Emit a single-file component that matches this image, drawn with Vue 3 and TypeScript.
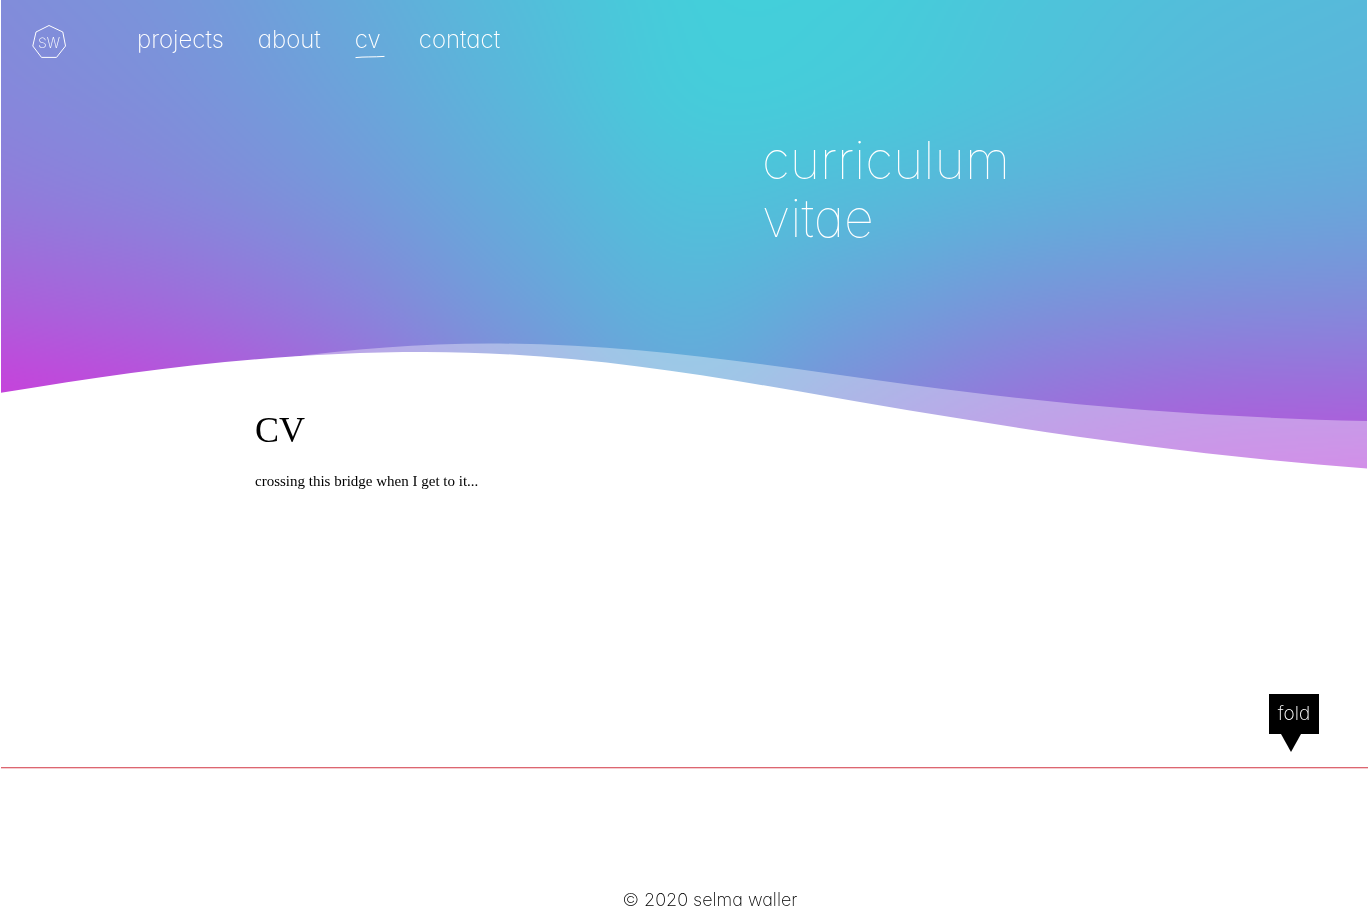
<script setup lang="ts">
import { onMounted, ref } from 'vue'

interface NavItem {
  label: string
  href: string
  active?: boolean
}

const navItems: NavItem[] = [
  { label: 'projects', href: '#projects' },
  { label: 'about', href: '#about' },
  { label: 'cv', href: '#cv', active: true },
  { label: 'contact', href: '#contact' },
]

// Mesh gradient: each value is the share of magenta over cyan at a node.
// Columns are spread evenly over the width, rows sit 100px apart.
const mesh: number[][] = [
  [0.48, 0.41, 0.28, 0.14, 0.02, 0.02, 0.08, 0.13, 0.16],
  [0.52, 0.45, 0.33, 0.18, 0.04, 0.05, 0.11, 0.17, 0.2],
  [0.61, 0.53, 0.41, 0.25, 0.11, 0.15, 0.22, 0.27, 0.3],
  [0.79, 0.7, 0.55, 0.35, 0.2, 0.3, 0.41, 0.46, 0.48],
  [1, 0.91, 0.74, 0.5, 0.31, 0.47, 0.63, 0.71, 0.73],
  [1, 0.98, 0.85, 0.65, 0.45, 0.65, 0.82, 0.92, 0.98],
]
const cyan = [66, 208, 218]
const magenta = [198, 67, 219]
const heroHeight = 470
const rowStep = 100

const canvas = ref<HTMLCanvasElement | null>(null)

function spline(a: number, b: number, c: number, d: number, t: number): number {
  return b + 0.5 * t * (c - a + t * (2 * a - 5 * b + 4 * c - d + t * (3 * (b - c) + d - a)))
}

function sampleLine(values: number[], pos: number): number {
  const last = values.length - 1
  const i = Math.min(Math.floor(pos), last - 1)
  const a = i > 0 ? values[i - 1] : 2 * values[0] - values[1]
  const d = i + 2 <= last ? values[i + 2] : 2 * values[last] - values[last - 1]
  return spline(a, values[i], values[i + 1], d, pos - i)
}

onMounted(() => {
  const el = canvas.value
  const ctx = el?.getContext('2d')
  if (!el || !ctx) return
  const { width, height } = el
  const image = ctx.createImageData(width, height)
  for (let x = 0; x < width; x++) {
    const column = mesh.map((row) => sampleLine(row, (x / (width - 1)) * (row.length - 1)))
    for (let y = 0; y < height; y++) {
      const pos = ((y / (height - 1)) * heroHeight) / rowStep
      const mix = Math.min(1, Math.max(0, sampleLine(column, pos)))
      const offset = (y * width + x) * 4
      for (let c = 0; c < 3; c++) {
        image.data[offset + c] = Math.round(cyan[c] + (magenta[c] - cyan[c]) * mix)
      }
      image.data[offset + 3] = 255
    }
  }
  ctx.putImageData(image, 0, 0)
})
</script>

<template>
  <div class="page">
    <header class="hero">
      <canvas ref="canvas" class="backdrop" width="683" height="235" aria-hidden="true"></canvas>
      <svg class="waves" viewBox="1 0 1366 470" preserveAspectRatio="none" aria-hidden="true">
        <path
          class="wave-light"
          d="M285 358 C350 349 420 343.5 490 343.5 C640 343.5 770 366 912 385 C1060 405 1200 417 1367 421 V471 H285 Z"
        />
        <path
          class="wave-solid"
          d="M0 393 C150 368 280 352 425 352 C560 352 680 371 800 391.5 C980 423 1160 453 1368 468.5 V471 H0 Z"
        />
      </svg>
      <div class="hero-content">
        <div class="bar">
          <a class="logo" href="#home" aria-label="SW home">
            <svg width="36" height="36" viewBox="0 0 36 36">
              <path d="M18 1.5 L31.8 8 L34.5 22 L25.5 33.4 H10.5 L1.8 22 L5 8 Z" />
              <text x="18" y="24" text-anchor="middle">SW</text>
            </svg>
          </a>
          <nav class="nav">
            <a
              v-for="item in navItems"
              :key="item.label"
              :href="item.href"
              :class="{ active: item.active }"
              :aria-current="item.active ? 'page' : undefined"
            >
              <span>{{ item.label }}</span>
              <svg v-if="item.active" width="30" height="4" viewBox="0 0 30 4" aria-hidden="true">
                <path d="M0.5 2.6 C9 1.6 18 2.2 29.5 1.4" />
              </svg>
            </a>
          </nav>
        </div>
        <p class="hero-title">curriculum<br />vitae</p>
      </div>
    </header>

    <main class="content">
      <h1>CV</h1>
      <p>crossing this bridge when I get to it...</p>
    </main>

    <div class="fold">
      <span class="fold-tag">fold</span>
    </div>

    <footer class="footer">© 2020 selma waller</footer>
  </div>
</template>

<style>
body {
  margin: 0;
  background: #fff;
}
</style>

<style scoped>
.page {
  display: flex;
  flex-direction: column;
  min-height: 100vh;
  overflow: hidden;
  color: #000;
  font-family: Inter, 'Liberation Sans', sans-serif;
  font-weight: 100;
  font-feature-settings: 'cv11' 1;
}

.hero {
  display: grid;
  min-height: 470px;
  margin: 0 1px;
  color: #fff;
}

.backdrop,
.waves,
.hero-content {
  grid-area: 1 / 1;
  min-width: 0;
}

.backdrop,
.waves {
  display: block;
  width: 100%;
  height: 470px;
}

.wave-light {
  fill: #fff;
  fill-opacity: 0.36;
}

.wave-solid {
  fill: #fff;
}

.bar {
  display: flex;
  align-items: flex-start;
  gap: 70px;
  padding: 24px 30px 0;
}

.logo {
  display: block;
  height: 36px;
}

.logo svg {
  display: block;
  fill: none;
  stroke: #fff;
  stroke-width: 1;
}

.logo text {
  fill: #fff;
  stroke: none;
  font-size: 14px;
  font-weight: 200;
}

.nav {
  display: flex;
  gap: 34px;
}

.nav a {
  display: flex;
  flex-direction: column;
  color: #fff;
  font-size: 24px;
  font-weight: 200;
  line-height: 31px;
  text-decoration: none;
}

.nav svg {
  display: block;
  fill: none;
  stroke: #fff;
}

.hero-title {
  margin: 72px 0 0 calc(56% - 4px);
  font-size: 52px;
  line-height: 58px;
}

.content {
  margin: -60px 255px 0;
  font-family: 'Liberation Serif', serif;
  font-weight: 400;
}

.content h1 {
  margin: 0;
  font-size: 36px;
  font-weight: 400;
  line-height: 40px;
}

.content p {
  margin: 20px 0 0;
  font-size: 15px;
  line-height: 22px;
}

.fold {
  display: flex;
  justify-content: flex-end;
  margin: 202px 0 0 1px;
  padding: 0 49px 15px 0;
  border-bottom: 1px solid #dc6670;
  box-shadow: 0 1px #f6ccd0;
}

.fold-tag {
  position: relative;
  width: 50px;
  margin-bottom: 18px;
  color: #fff;
  background: #000;
  font-size: 19px;
  font-weight: 200;
  line-height: 40px;
  text-align: center;
}

.fold-tag::after {
  content: '';
  position: absolute;
  top: 100%;
  left: 12px;
  border: solid transparent;
  border-width: 18px 10px 0;
  border-top-color: #000;
}

.footer {
  margin-top: auto;
  padding: 0 0 12px 52px;
  font-size: 18px;
  font-weight: 200;
  line-height: 24px;
  text-align: center;
}
</style>
